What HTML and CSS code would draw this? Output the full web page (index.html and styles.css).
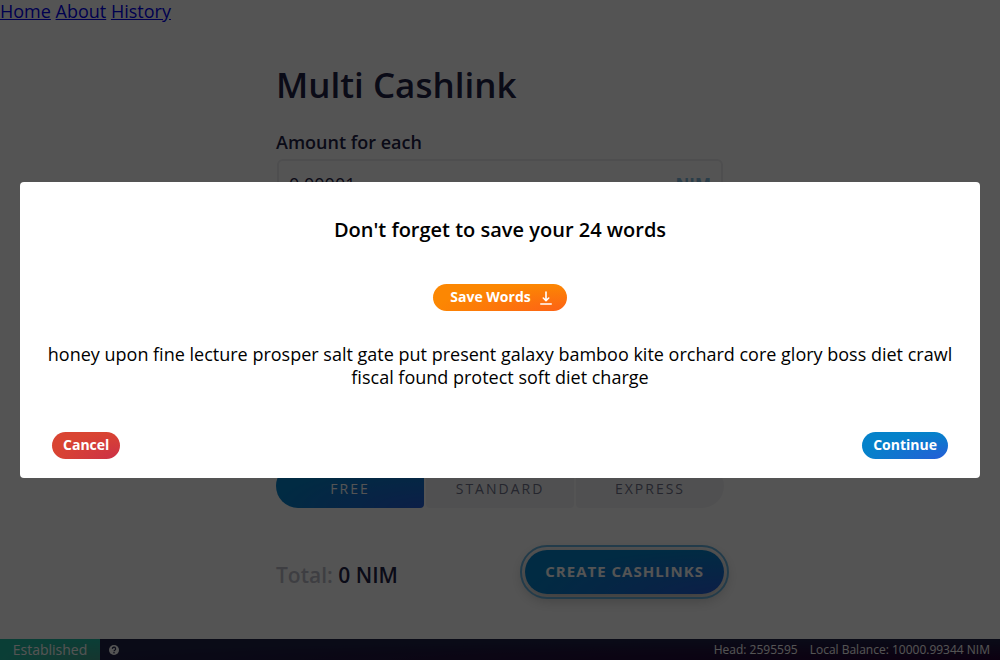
FILE: index.html
```
<!DOCTYPE html>
<html lang="en">
<head>
<meta charset="utf-8">
<meta name="viewport" content="width=device-width, initial-scale=1">
<title>Multi Cashlink</title>
<link rel="stylesheet" href="styles.css">
</head>
<body>
<div class="page">
  <nav class="nav"><a href="#home">Home</a> <a href="#about">About</a> <a href="#history">History</a></nav>
  <main class="form">
    <h1 class="title">Multi Cashlink</h1>
    <label class="label" for="amount">Amount for each</label>
    <div class="amount">
      <input class="amount-input" id="amount" type="text" value="0.00001">
      <span class="unit">NIM</span>
    </div>
    <div class="fees" role="radiogroup">
      <label class="fee"><input type="radio" name="fee" checked><span>FREE</span></label>
      <label class="fee"><input type="radio" name="fee"><span>STANDARD</span></label>
      <label class="fee"><input type="radio" name="fee"><span>EXPRESS</span></label>
    </div>
    <div class="summary">
      <p class="total"><span class="total-label">Total:</span> 0 NIM</p>
      <button class="create" type="button">CREATE CASHLINKS</button>
    </div>
  </main>
  <footer class="status">
    <span class="state">Established</span>
    <svg class="help" viewBox="0 0 10 10" aria-hidden="true"><circle cx="5" cy="5" r="5" fill="#fff"/><path d="M3.4 3.9a1.6 1.6 0 1 1 2.4 1.3c-.5.3-.8.5-.8 1" fill="none" stroke="#1f2348" stroke-width="1.3"/><circle cx="5" cy="7.7" r=".8" fill="#1f2348"/></svg>
    <span class="head">Head: 2595595</span>
    <span>Local Balance: 10000.99344 NIM</span>
  </footer>
</div>
<div class="overlay">
  <section class="modal" role="dialog" aria-modal="true" aria-labelledby="modal-title">
    <h2 class="modal-title" id="modal-title">Don't forget to save your 24 words</h2>
    <button class="pill pill-orange" type="button">Save Words
      <svg class="download" viewBox="0 0 12 14" aria-hidden="true"><path d="M6 1v8.5M3.3 7 6 9.7 8.7 7M.8 13h10.4" fill="none" stroke="#fff" stroke-width="1.6" stroke-linecap="round" stroke-linejoin="round"/></svg>
    </button>
    <p class="words">honey upon fine lecture prosper salt gate put present galaxy bamboo kite orchard core glory boss diet crawl fiscal found protect soft diet charge</p>
    <div class="actions">
      <button class="pill pill-red" type="button">Cancel</button>
      <button class="pill pill-blue" type="button">Continue</button>
    </div>
  </section>
</div>
</body>
</html>
```
FILE: styles.css
```
* { box-sizing: border-box; }

body {
  margin: 0;
  background: #fff;
  color: #000;
  font-family: "Open Sans", "Noto Sans", sans-serif;
  font-size: 18px;
  line-height: 23px;
}

button, input { font-family: inherit; }

.page {
  display: flex;
  flex-direction: column;
  min-height: 100vh;
}

.nav a { color: #00e; }

.form {
  width: 100%;
  max-width: 448px;
  margin: 0 auto;
  color: #1f2348;
}

.title {
  margin: 38px 0 22px;
  font-size: 35px;
  line-height: 48px;
  font-weight: 600;
}

.label {
  display: block;
  margin-bottom: 5px;
  font-weight: 600;
}

.amount {
  display: flex;
  align-items: center;
  height: 50px;
  margin: 0 1px 255px;
  padding: 0 10px;
  border: 2px solid #ebebef;
  border-radius: 6px;
}

.amount-input {
  flex: 1;
  min-width: 0;
  padding: 0;
  border: 0;
  background: none;
  color: #1f2348;
  font-size: 18px;
}

.unit {
  color: #7fb8dc;
  font-size: 17px;
  font-weight: 700;
}

.fees {
  display: flex;
  gap: 2px;
}

.fee {
  flex: 1;
  height: 44px;
  padding-top: 14px;
  border-radius: 4px;
  background: #f3f3f5;
  color: #71738c;
  font-size: 14px;
  line-height: 22px;
  letter-spacing: 2px;
  text-align: center;
}

.fee:first-child { border-radius: 22px 4px 4px 22px; }
.fee:last-child { border-radius: 4px 22px 22px 4px; }

.fee:has(input:checked) {
  background: radial-gradient(100% 100% at bottom right, #265dd7, #0582ca);
  color: #fff;
}

.fee input {
  position: absolute;
  opacity: 0;
}

.summary {
  display: flex;
  align-items: center;
  justify-content: space-between;
  margin-top: 42px;
}

.total {
  margin: 6px 0 0;
  font-size: 21px;
  font-weight: 600;
}

.total-label { color: #bcbdc8; }

.create {
  height: 44px;
  padding: 0 20px 2px;
  border: 0;
  border-radius: 22px;
  background: radial-gradient(100% 100% at bottom right, #265dd7, #0582ca);
  box-shadow: 0 4px 16px rgba(0, 0, 0, .3);
  outline: 2px solid #69b4df;
  outline-offset: 3px;
  color: #fff;
  font-size: 15px;
  font-weight: 700;
  letter-spacing: 1px;
}

.status {
  display: flex;
  align-items: center;
  gap: 12px;
  height: 21px;
  margin-top: auto;
  padding-right: 10px;
  background: radial-gradient(100% 100% at bottom right, #260133, #1f2348);
  color: #fff;
  font-size: 12px;
  line-height: 21px;
}

.state {
  width: 100px;
  margin-right: -3px;
  background: radial-gradient(100% 100% at bottom right, #41a38e, #21bca5);
  font-size: 14px;
  text-align: center;
}

.help {
  width: 10px;
  height: 10px;
}

.head { margin-left: auto; }

.overlay {
  position: fixed;
  inset: 0;
  display: flex;
  align-items: center;
  justify-content: center;
  padding: 20px;
  background: rgba(0, 0, 0, .67);
}

.modal {
  width: 100%;
  padding: 32px 24px 19px;
  border-radius: 4px;
  background: #fff;
  text-align: center;
}

.modal-title {
  margin: 0 0 38px;
  font-size: 20px;
  line-height: 32px;
  font-weight: 600;
}

.pill {
  display: inline-flex;
  align-items: center;
  gap: 9px;
  height: 27px;
  padding: 0 11px 2px;
  border: 0;
  border-radius: 14px;
  color: #fff;
  font-size: 14px;
  font-weight: 700;
}

.pill-orange {
  padding: 0 15px 2px 17px;
  background: radial-gradient(100% 100% at bottom right, #fd6216, #fc8702);
}

.pill-red { background: radial-gradient(100% 100% at bottom right, #cc3047, #d94432); }
.pill-blue { background: radial-gradient(100% 100% at bottom right, #265dd7, #0582ca); }

.download {
  width: 12px;
  height: 14px;
  margin-top: 2px;
}

.words { margin: 32px 0 43px; }

.actions {
  display: flex;
  justify-content: space-between;
  padding: 0 8px;
}
```
